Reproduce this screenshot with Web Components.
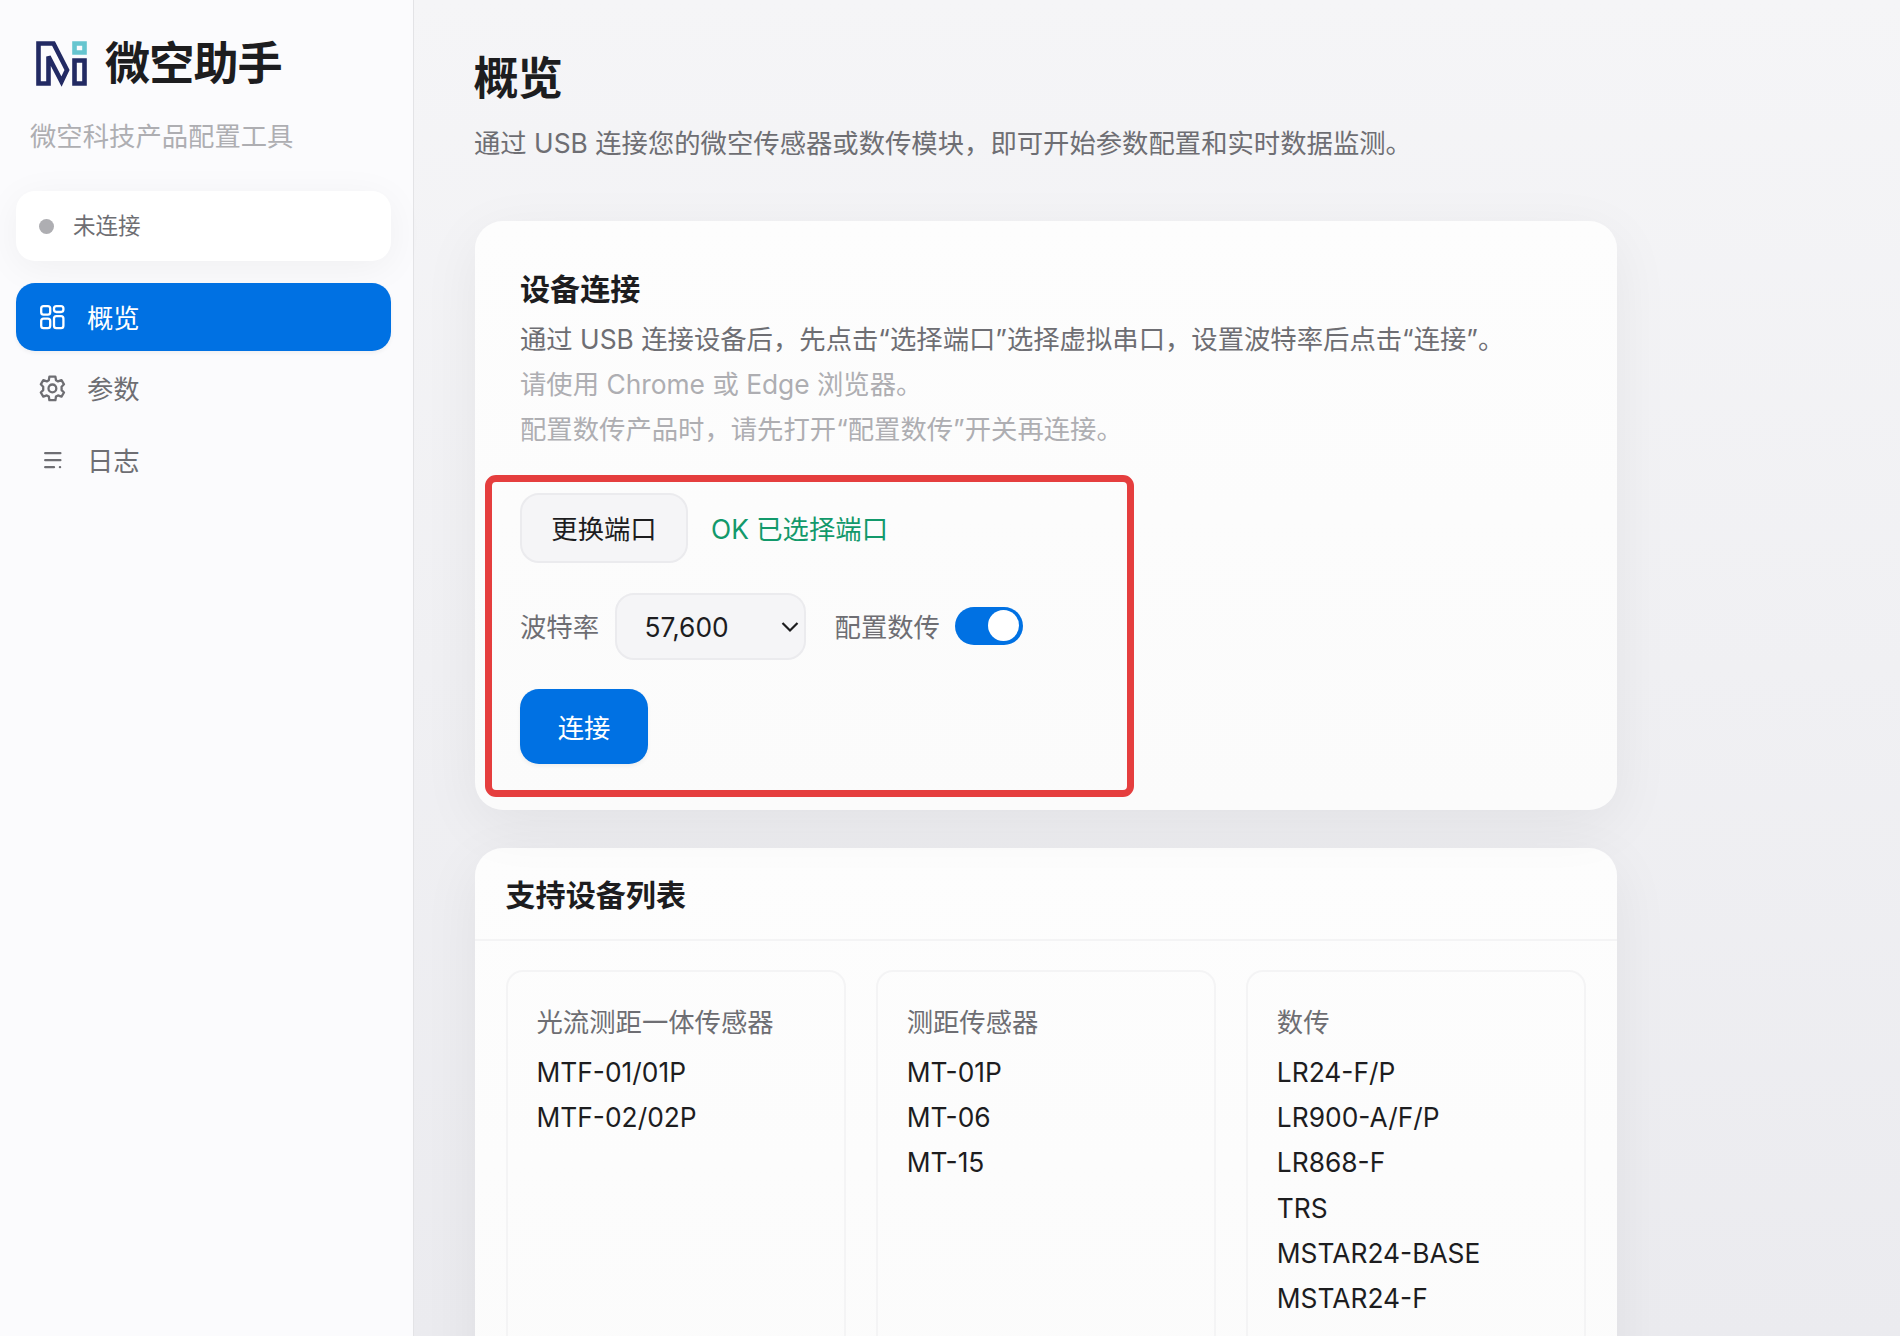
<!DOCTYPE html>
<html lang="zh-CN">
<head>
<meta charset="utf-8">
<title>微空助手</title>
<style>
html, body {
  margin: 0;
  height: 100%;
  overflow: hidden;
}
body {
  font-family: Inter, "Noto Sans CJK SC", sans-serif;
  font-size: 26.35px;
  color: #1d1d1f;
}
</style>
</head>
<body>
<assistant-app></assistant-app>

<script>
/**
 * Attach an open shadow root and fill it with the given markup
 *
 * @param {HTMLElement} host
 * @param {string} html
 */
function render (host, html) {
  const template = document.createElement('template')
  template.innerHTML = html
  host.attachShadow({ mode: 'open' }).appendChild(template.content.cloneNode(true))
}

const icons = {
  overview: `
    <rect x="1.2" y="1.2" width="9" height="8.4" rx="2.4"/>
    <rect x="14" y="1.2" width="9.4" height="5.8" rx="2.4"/>
    <rect x="1.2" y="13.6" width="9" height="9.6" rx="2.4"/>
    <rect x="14" y="11.2" width="9.4" height="12" rx="2.4"/>`,
  settings: `
    <path d="M9.4.6h6l.6 3.7 2 1.1 3.500-1.300 2.500 4.200-2.400 2.400v3.400l2.400 2.400-2.500 4.200-3.500-1.300-2 1.100-.6 3.700h-6l-.6-3.700-2-1.100-3.500 1.300L.8 16.500l2.400-2.400v-3.400L.8 8.300l2.500-4.200 3.500 1.300 2-1.100z"/>
    <circle cx="12.400" cy="12.400" r="3.900"/>`,
  log: `
    <path d="M5.200 5.200h15.200M5.200 12.200h15.200M5.200 19.200h8.800M19.900 19.200h.2"/>`
}

class AppLogo extends HTMLElement {
  constructor () {
    super()
    render(this, `
      <style>
        :host { display: block; width: 52px; height: 46px; }
        svg { display: block; }
      </style>
      <svg width="52" height="46" viewBox="0 0 52 46" fill="none" stroke-width="4.600">
        <path stroke="#222a63" d="M2.500 2.500H17.500L31 29 25.500 40.500 12.500 15.500V42.500H2.500z"/>
        <path stroke="#222a63" d="M38.500 19.500H48.500V42.500H38.500z"/>
        <path stroke="#66c5cf" d="M38.500 2.500H48.500V11.500H38.500z"/>
      </svg>`)
  }
}

class NavItem extends HTMLElement {
  constructor () {
    super()
    render(this, `
      <style>
        :host {
          display: flex;
          align-items: center;
          gap: 21px;
          height: 68px;
          padding-left: 24px;
          border-radius: 19px;
          color: #6e6e73;
          line-height: 1;
        }
        :host([active]) {
          background: #0071e3;
          color: #fff;
          box-shadow: 0 2px 4px rgba(0, 0, 0, .05);
        }
        svg { flex: none; overflow: visible; }
        span { padding: 2px 0 0 1px; }
      </style>
      <svg width="25" height="25" viewBox="0 0 25 25" fill="none" stroke="currentColor"
        stroke-width="2.300" stroke-linecap="round" stroke-linejoin="round">${icons[this.getAttribute('icon')]}</svg>
      <span><slot></slot></span>`)
  }
}

class ConnectionStatus extends HTMLElement {
  constructor () {
    super()
    render(this, `
      <style>
        :host {
          display: flex;
          align-items: center;
          gap: 19px;
          height: 70px;
          padding-left: 23px;
          border-radius: 19px;
          background: #fff;
          box-shadow: 0 7px 38px rgba(0, 0, 0, .05);
          color: #6e6e73;
          font-size: 22.56px;
          line-height: 1;
        }
        i {
          width: 15px;
          height: 15px;
          border-radius: 50%;
          background: #aeaeb2;
        }
      </style>
      <i></i><span><slot></slot></span>`)
  }
}

class AppSidebar extends HTMLElement {
  constructor () {
    super()
    render(this, `
      <style>
        :host {
          display: block;
          box-sizing: border-box;
          width: 414px;
          padding: 32px 22px 0 16px;
          border-right: 1px solid #e3e3e6;
          background: #fbfbfd;
        }
        .brand {
          display: flex;
          align-items: center;
          gap: 17px;
          height: 63px;
          padding-left: 20px;
          font-size: 45.12px;
          font-weight: 700;
          letter-spacing: -.02em;
          line-height: 1;
        }
        .slogan {
          height: 40px;
          margin: 21px 0 35px 14px;
          color: #aeaeb2;
          line-height: 40px;
        }
        nav {
          display: flex;
          flex-direction: column;
          gap: 3.6px;
          margin-top: 22px;
        }
      </style>
      <div class="brand"><app-logo></app-logo><span>微空助手</span></div>
      <div class="slogan">微空科技产品配置工具</div>
      <connection-status>未连接</connection-status>
      <nav>
        <nav-item icon="overview" active>概览</nav-item>
        <nav-item icon="settings">参数</nav-item>
        <nav-item icon="log">日志</nav-item>
      </nav>`)
  }
}

class AppButton extends HTMLElement {
  constructor () {
    super()
    render(this, `
      <style>
        :host {
          display: flex;
          align-items: center;
          justify-content: center;
          box-sizing: border-box;
          width: 168px;
          height: 70px;
          padding-top: 1px;
          border: 2px solid #ebebee;
          border-radius: 19px;
          background: #f5f5f7;
          line-height: 1;
        }
        :host([primary]) {
          width: 128px;
          height: 75px;
          padding-top: 3px;
          border: 0;
          background: #0071e3;
          color: #fff;
          box-shadow: 0 2px 4px rgba(0, 0, 0, .06);
        }
      </style>
      <span><slot></slot></span>`)
  }
}

class BaudSelect extends HTMLElement {
  constructor () {
    super()
    render(this, `
      <style>
        :host {
          display: flex;
          align-items: center;
          justify-content: space-between;
          box-sizing: border-box;
          width: 191px;
          height: 67px;
          padding: 1px 5px 0 28px;
          border: 2px solid #ebebee;
          border-radius: 19px;
          background: #f5f5f7;
          line-height: 1;
        }
      </style>
      <span><slot></slot></span>
      <svg width="18" height="12" viewBox="0 0 18 12" fill="none" stroke="#1d1d1f" stroke-width="2.200">
        <path d="M1.500 2l7.500 7.500 7.500-7.500"/>
      </svg>`)
  }
}

class ToggleSwitch extends HTMLElement {
  constructor () {
    super()
    render(this, `
      <style>
        :host {
          display: flex;
          align-items: center;
          justify-content: flex-end;
          box-sizing: border-box;
          width: 68px;
          height: 38px;
          padding: 0 4px 2px 0;
          border-radius: 19px;
          background: #0071e3;
        }
        i {
          width: 31px;
          height: 31px;
          border-radius: 50%;
          background: #fff;
        }
      </style>
      <i></i>`)
  }
}

class PanelCard extends HTMLElement {
  constructor () {
    super()
    render(this, `
      <style>
        :host {
          display: block;
          box-sizing: border-box;
          border-radius: 28px;
          background: linear-gradient(#fdfdfd, #fbfbfb);
          box-shadow: 0 15px 60px rgba(0, 0, 0, .06);
        }
      </style>
      <slot></slot>`)
  }
}

class ConnectPanel extends HTMLElement {
  constructor () {
    super()
    render(this, `
      <style>
        :host { display: block; }
        panel-card {
          position: relative;
          height: 589px;
          padding: 45px 46px 0 45.500px;
        }
        h2 {
          height: 51px;
          margin: 0;
          font-size: 30.08px;
          font-weight: 700;
          line-height: 46px;
        }
        p {
          margin: 0;
          color: #6e6e73;
          line-height: 45.12px;
        }
        p.hint { color: #aeaeb2; }
        .row {
          display: flex;
          align-items: center;
          margin-top: 29.400px;
          color: #6e6e73;
          line-height: 1;
        }
        .row:first-of-type { margin-top: 41px; }
        .row > span { padding-top: 2px; }
        .row app-button:not([primary]) { color: #1d1d1f; }
        .row .ok { margin-left: 23px; color: #12996b; }
        baud-select { margin: 0 29px 0 15.500px; color: #1d1d1f; }
        toggle-switch { margin-left: 15.500px; }
        .marker {
          position: absolute;
          left: 10px;
          top: 253.500px;
          box-sizing: border-box;
          width: 649px;
          height: 322.500px;
          border: 7px solid #e53e3e;
          border-radius: 11px;
        }
      </style>
      <panel-card>
        <h2>设备连接</h2>
        <p>通过 USB 连接设备后，先点击“选择端口”选择虚拟串口，设置波特率后点击“连接”。</p>
        <p class="hint">请使用 Chrome 或 Edge 浏览器。</p>
        <p class="hint">配置数传产品时，请先打开“配置数传”开关再连接。</p>
        <div class="row">
          <app-button>更换端口</app-button><span class="ok">OK 已选择端口</span>
        </div>
        <div class="row">
          <span>波特率</span><baud-select>57,600</baud-select>
          <span>配置数传</span><toggle-switch></toggle-switch>
        </div>
        <div class="row"><app-button primary>连接</app-button></div>
        <div class="marker"></div>
      </panel-card>`)
  }
}

class DeviceGroup extends HTMLElement {
  constructor () {
    super()
    const items = this.getAttribute('items').split(',')
    render(this, `
      <style>
        :host {
          display: block;
          border: 2px solid #f4f4f5;
          border-radius: 17px;
          padding: 27px 29px;
        }
        h3 {
          margin: 0 0 5px;
          font-size: inherit;
          font-weight: 400;
          color: #6e6e73;
          line-height: 46px;
        }
        div { line-height: 45.200px; }
      </style>
      <h3>${this.getAttribute('heading')}</h3>
      ${items.map(item => `<div>${item}</div>`).join('')}`)
  }
}

class DevicePanel extends HTMLElement {
  constructor () {
    super()
    render(this, `
      <style>
        :host { display: block; }
        h2 {
          height: 91px;
          margin: 0;
          padding-left: 31px;
          border-bottom: 2px solid #f4f4f5;
          font-size: 30.08px;
          font-weight: 700;
          line-height: 94px;
        }
        .groups {
          display: grid;
          grid-template-columns: repeat(3, 1fr);
          gap: 30px;
          height: 480px;
          padding: 29px 31px;
        }
      </style>
      <panel-card>
        <h2>支持设备列表</h2>
        <div class="groups">
          <device-group heading="光流测距一体传感器" items="MTF-01/01P,MTF-02/02P"></device-group>
          <device-group heading="测距传感器" items="MT-01P,MT-06,MT-15"></device-group>
          <device-group heading="数传" items="LR24-F/P,LR900-A/F/P,LR868-F,TRS,MSTAR24-BASE,MSTAR24-F"></device-group>
        </div>
      </panel-card>`)
  }
}

class AssistantApp extends HTMLElement {
  constructor () {
    super()
    render(this, `
      <style>
        :host {
          display: grid;
          grid-template-columns: 414px 1fr;
          height: 100vh;
          overflow: hidden;
          background: linear-gradient(#f5f5f7, #ebebef);
        }
        main {
          min-width: 0;
          padding: 47px 0 0 60.500px;
        }
        h1 {
          margin: 0 0 0 -1px;
          font-size: 45.12px;
          font-weight: 700;
          letter-spacing: -.02em;
          line-height: 64px;
        }
        .lead {
          margin: 9px 0 55px -.5px;
          color: #6e6e73;
          line-height: 46px;
        }
        connect-panel, device-panel { width: 1142.500px; }
        device-panel { margin-top: 38px; }
      </style>
      <app-sidebar></app-sidebar>
      <main>
        <h1>概览</h1>
        <p class="lead">通过 USB 连接您的微空传感器或数传模块，即可开始参数配置和实时数据监测。</p>
        <connect-panel></connect-panel>
        <device-panel></device-panel>
      </main>`)
  }
}

customElements.define('app-logo', AppLogo)
customElements.define('nav-item', NavItem)
customElements.define('connection-status', ConnectionStatus)
customElements.define('app-sidebar', AppSidebar)
customElements.define('app-button', AppButton)
customElements.define('baud-select', BaudSelect)
customElements.define('toggle-switch', ToggleSwitch)
customElements.define('panel-card', PanelCard)
customElements.define('connect-panel', ConnectPanel)
customElements.define('device-group', DeviceGroup)
customElements.define('device-panel', DevicePanel)
customElements.define('assistant-app', AssistantApp)
</script>
</body>
</html>
